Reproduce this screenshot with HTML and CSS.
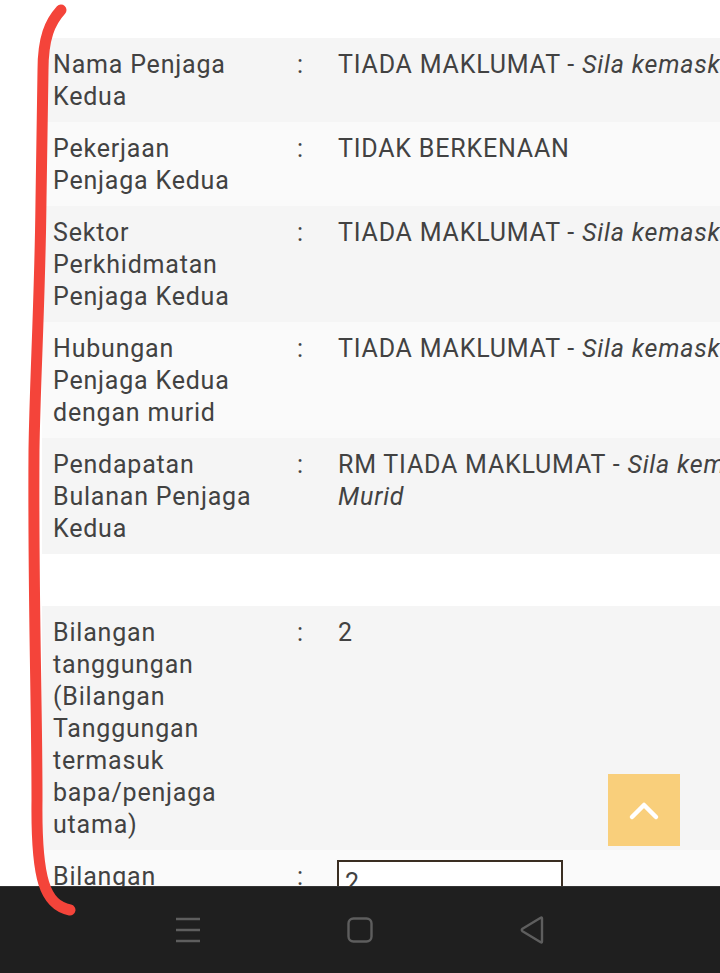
FILE: index.html
```html
<!DOCTYPE html>
<html lang="ms">
<head>
  <meta charset="UTF-8">
  <meta name="viewport" content="width=device-width, initial-scale=1.0">
  <title>Maklumat Penjaga</title>
  <link rel="stylesheet" href="styles.css">
</head>
<body>
  <div class="page">
    <table class="info-table">
      <tr class="row-dark">
        <td class="label">Nama Penjaga Kedua</td>
        <td class="colon">:</td>
        <td class="value">TIADA MAKLUMAT - <em>Sila kemaskini di Modul Murid</em></td>
      </tr>
      <tr class="row-light">
        <td class="label">Pekerjaan Penjaga Kedua</td>
        <td class="colon">:</td>
        <td class="value">TIDAK BERKENAAN</td>
      </tr>
      <tr class="row-dark">
        <td class="label">Sektor Perkhidmatan Penjaga Kedua</td>
        <td class="colon">:</td>
        <td class="value">TIADA MAKLUMAT - <em>Sila kemaskini di Modul Murid</em></td>
      </tr>
      <tr class="row-light">
        <td class="label">Hubungan Penjaga Kedua dengan murid</td>
        <td class="colon">:</td>
        <td class="value">TIADA MAKLUMAT - <em>Sila kemaskini di Modul Murid</em></td>
      </tr>
      <tr class="row-dark">
        <td class="label">Pendapatan Bulanan Penjaga Kedua</td>
        <td class="colon">:</td>
        <td class="value">RM TIADA MAKLUMAT - <em>Sila kemaskini di Modul Murid</em></td>
      </tr>
      <tr class="row-blank">
        <td colspan="3">&nbsp;</td>
      </tr>
      <tr class="row-dark">
        <td class="label">Bilangan tanggungan (Bilangan Tanggungan termasuk bapa/penjaga utama)</td>
        <td class="colon">:</td>
        <td class="value">2</td>
      </tr>
      <tr class="row-light">
        <td class="label">Bilangan tanggungan bersekolah</td>
        <td class="colon">:</td>
        <td class="value"><input type="text" class="count-input" value="2"></td>
      </tr>
    </table>
  </div>

  <!-- Back to top button -->
  <a href="#" class="back-top" aria-label="Kembali ke atas">
    <svg width="72" height="72" viewBox="0 0 72 72">
      <polyline points="24,43 36,31 48,43" fill="none" stroke="#fff" stroke-width="4.5" stroke-linecap="round" stroke-linejoin="round"/>
    </svg>
  </a>

  <!-- Hand-drawn marker line -->
  <svg class="marker" width="720" height="973" viewBox="0 0 720 973">
    <path d="M61 10 C 50 22 43 38 43 70 L 41 200 C 40 300 35 380 34 450 C 33 600 37 700 37 800 C 36 880 45 905 70 910" fill="none" stroke="#f4443a" stroke-width="11" stroke-linecap="round" stroke-linejoin="round"/>
  </svg>

  <!-- Phone navigation bar -->
  <nav class="nav-bar">
    <svg class="nav-icon" width="30" height="30" viewBox="0 0 30 30">
      <path d="M3 4 H27 M3 15 H27 M3 26 H27" stroke="#5e5e5e" stroke-width="2.4"/>
    </svg>
    <svg class="nav-icon" width="30" height="30" viewBox="0 0 30 30">
      <rect x="3.5" y="3.5" width="23" height="23" rx="5" fill="none" stroke="#5e5e5e" stroke-width="2.4"/>
    </svg>
    <svg class="nav-icon" width="30" height="30" viewBox="0 0 30 30">
      <path d="M25 3.5 L25 26.5 Q25 28 23.7 27.2 L5.5 16.2 Q4 15 5.5 13.8 L23.7 2.8 Q25 2 25 3.5 Z" fill="none" stroke="#5e5e5e" stroke-width="2.4" stroke-linejoin="round"/>
    </svg>
  </nav>
</body>
</html>
```

FILE: styles.css
```css
body {
  margin: 0;
  background-color: white;
  color: #424242;
  font-family: Roboto, "Noto Sans", sans-serif;
  font-size: 25px;
  letter-spacing: 0.8px;
  line-height: 32px;
  overflow: hidden;
  height: 973px;
}

.page {
  padding: 38px 0 0 42px;
}

/* Info table */
.info-table {
  border-collapse: collapse;
  table-layout: fixed;
  width: 906px;
}

.info-table td {
  padding: 11px 0 9px;
  vertical-align: top;
}

.row-dark {
  background-color: #f5f5f5;
}

.row-light {
  background-color: #fafafa;
}

.row-blank {
  background-color: white;
}

.label {
  width: 210px;
  padding-left: 11px !important;
  padding-right: 11px !important;
}

.colon {
  width: 41px;
  padding-left: 23px !important;
}

.value {
  width: 610px;
}

.value em {
  font-style: italic;
}

.count-input {
  box-sizing: border-box;
  width: 226px;
  height: 44px;
  margin: -1px 0 0 -1px;
  padding: 2px 6px;
  border: 2px solid #3a2e22;
  border-radius: 0;
  font-family: Roboto, "Noto Sans", sans-serif;
  font-size: 25px;
  color: #424242;
  background: white;
}

/* Back to top */
.back-top {
  position: fixed;
  left: 608px;
  top: 774px;
  width: 72px;
  height: 72px;
  background-color: #f9cf7b;
  display: block;
}

.back-top svg {
  display: block;
}

/* Marker line */
.marker {
  position: fixed;
  left: 0;
  top: 0;
  pointer-events: none;
  z-index: 5;
}

/* Navigation bar */
.nav-bar {
  position: fixed;
  left: 0;
  right: 0;
  bottom: 0;
  height: 87px;
  background-color: #1f1f1f;
  border-top: 1px solid #333;
  display: flex;
  justify-content: center;
  align-items: center;
  gap: 142px;
  box-sizing: border-box;
}

.nav-icon {
  display: block;
}
```
